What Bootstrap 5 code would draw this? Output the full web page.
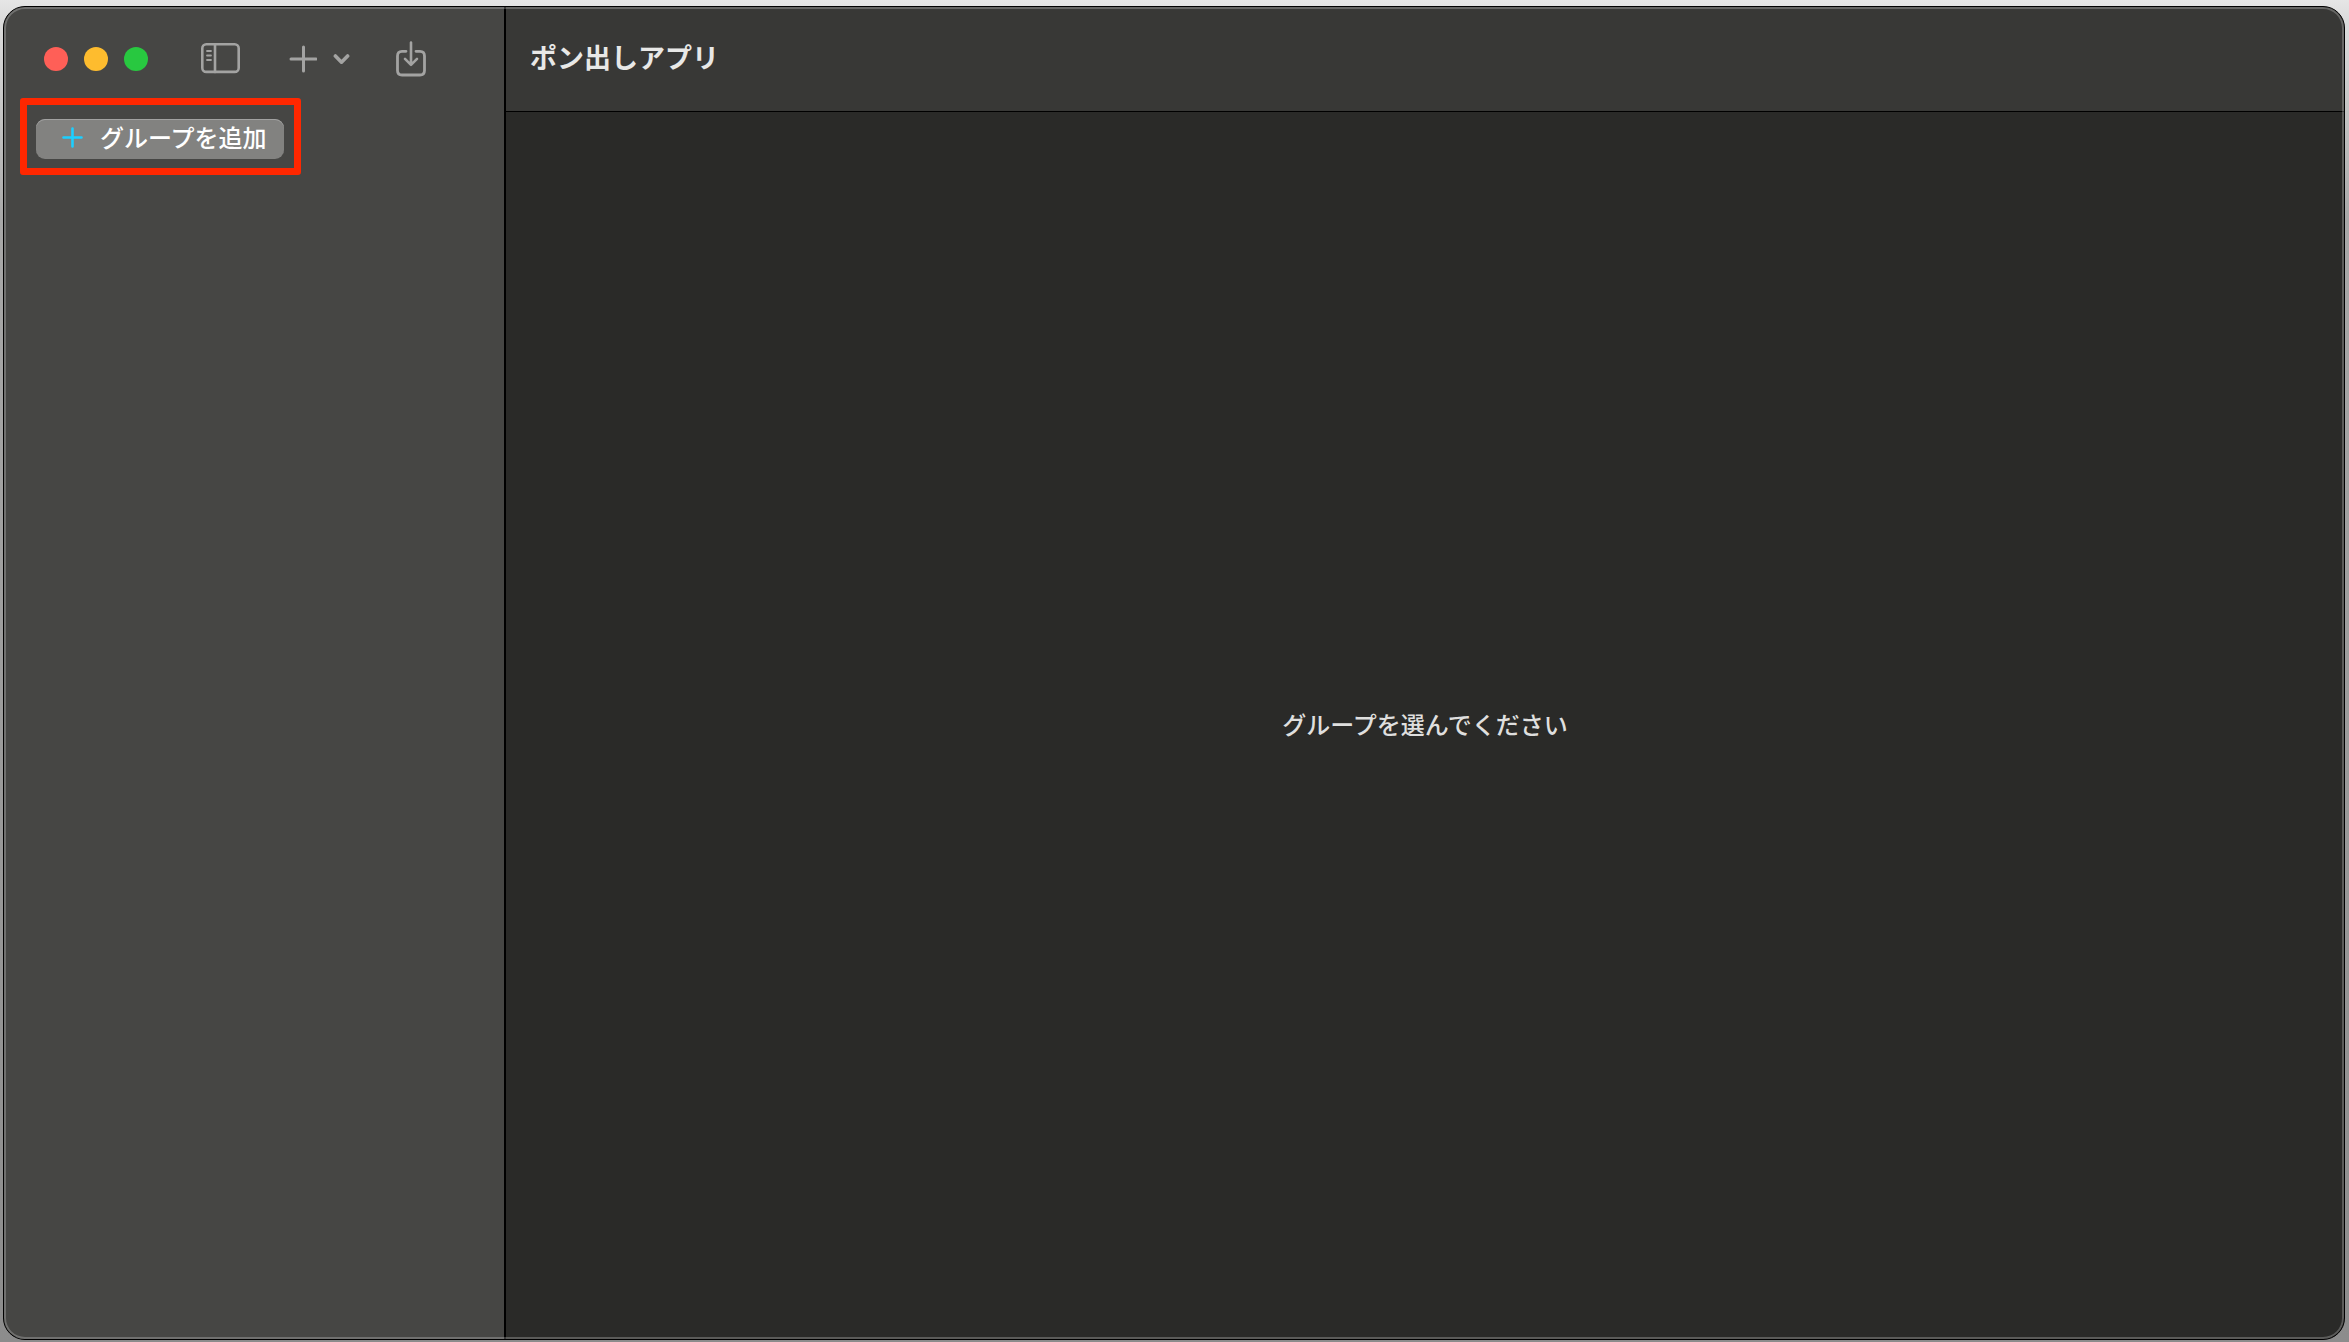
<!DOCTYPE html>
<html lang="ja" data-bs-theme="dark">
<head>
<meta charset="utf-8">
<meta name="viewport" content="width=device-width, initial-scale=1">
<title>ポン出しアプリ</title>
<link href="https://cdn.jsdelivr.net/npm/bootstrap@5.3.0/dist/css/bootstrap.min.css" rel="stylesheet">
<style>
  body {
    font-family: "Noto Sans CJK JP", sans-serif;
    font-size: 24px;
    line-height: 36px;
    font-weight: 500;
    color: #dfdfde;
    padding: 6px 4px 2px 3px;
    background: linear-gradient(#e6e6e6 0, #dcdcdc 20px, #a8a8a8 220px, #8c8c8c 100%);
  }
  .app-window {
    background: #2a2a28;
    border: 1px solid #000;
    border-radius: 22px;
  }
  /* light rim drawn above both panes */
  .app-window::after {
    content: "";
    position: absolute;
    inset: 0;
    border-radius: 21px;
    box-shadow: inset 0 0 0 2px rgba(255, 255, 255, .23);
    pointer-events: none;
  }
  .sidebar {
    width: 502px;
    background: #464644;
    border-right: 2px solid #000;
  }
  .toolbar { height: 104px; }
  .side-tools { padding-left: 40px; color: #a3a3a2; }
  .light { width: 24px; height: 24px; border: 0; }
  .light-close { background: #ff5f57; }
  .light-min { background: #febc2e; }
  .light-zoom { background: #28c840; }
  .tool { color: inherit; background: none; border: 0; }
  .tool svg, .add-group svg { display: block; fill: none; stroke: currentColor; stroke-linecap: round; stroke-linejoin: round; }
  .tool-panel { margin-left: 53px; }
  .tool-add { margin-left: 49px; }
  .tool-share { margin-left: 46px; }
  .groups { padding: 8px 32px; }
  .add-group {
    width: 248px;
    height: 40px;
    padding: 0 0 4px 26px;
    gap: 17px;
    color: #fff;
    font-weight: 500;
    background: #828280;
    border: 0;
    border-radius: 9px;
    box-shadow: inset 0 1px 0 #a2a2a1;
  }
  .add-group svg { stroke: #1ccfff; }
  .callout-frame::after {
    content: "";
    position: absolute;
    inset: -21px -17px -16px -16px;
    border: 7px solid #ff2700;
    border-radius: 3px;
    pointer-events: none;
  }
  .title-bar {
    padding: 0 24px 4px;
    background: #383836;
  }
  .title-line { height: 1px; background: #000; }
  .title-bar h1 { font-size: 27px; line-height: 36px; font-weight: 700; color: #e8e8e7; }
  .empty-note { padding-bottom: 4px; }
</style>
</head>
<body class="vh-100 d-flex">
<div class="app-window position-relative d-flex flex-grow-1 overflow-hidden">
  <aside class="sidebar flex-shrink-0">
    <div class="toolbar side-tools d-flex align-items-center">
      <div class="d-flex gap-3">
        <button class="light light-close rounded-circle p-0" type="button" aria-label="閉じる"></button>
        <button class="light light-min rounded-circle p-0" type="button" aria-label="しまう"></button>
        <button class="light light-zoom rounded-circle p-0" type="button" aria-label="拡大"></button>
      </div>
      <button class="tool tool-panel p-0" type="button" aria-label="サイドバー">
        <svg width="39" height="32" viewBox="0 0 39 32" stroke-width="2.6"><rect x="1.3" y="1.3" width="36.4" height="27.600" rx="4"/><path d="M14 1.300v27.600"/><path stroke-width="1.800" d="M6 8h4M6 12.500h4M6 17h4"/></svg>
      </button>
      <button class="tool tool-add p-0 d-flex align-items-center gap-3" type="button" aria-label="追加">
        <svg width="28" height="28" viewBox="0 0 28 28" stroke-width="3"><path d="M14.500 1.900v24.200M2 14h25"/></svg>
        <svg width="17" height="12" viewBox="0 0 17 12" stroke-width="3.600"><path d="M2.400 3l6.100 6.200L14.600 3"/></svg>
      </button>
      <button class="tool tool-share p-0" type="button" aria-label="読み込む">
        <svg width="30" height="36" viewBox="0 0 30 36" stroke-width="2.800"><path d="M10 10.300H6Q1.500 10.300 1.500 15v14.500Q1.500 34 6 34h18q4.500 0 4.500-4.500V15q0-4.700-4.500-4.700h-4"/><path stroke-width="2.600" d="M15 1.500v22M9 17.800l6 6 6-6"/></svg>
      </button>
    </div>
    <div class="groups d-flex">
      <div class="callout-frame position-relative">
        <button class="add-group d-flex align-items-center" type="button">
          <svg width="21" height="22" viewBox="0 0 21 22" stroke-width="2.600"><path d="M10.500 2.500v18M1.500 11.500h18"/></svg>
          <span>グループを追加</span>
        </button>
      </div>
    </div>
  </aside>
  <main class="flex-grow-1 d-flex flex-column">
    <header class="toolbar title-bar d-flex align-items-center">
      <h1 class="m-0">ポン出しアプリ</h1>
    </header>
    <div class="title-line"></div>
    <div class="flex-grow-1 d-flex align-items-center justify-content-center">
      <p class="empty-note m-0">グループを選んでください</p>
    </div>
  </main>
</div>
<script src="https://cdn.jsdelivr.net/npm/bootstrap@5.3.0/dist/js/bootstrap.bundle.min.js"></script>
</body>
</html>
